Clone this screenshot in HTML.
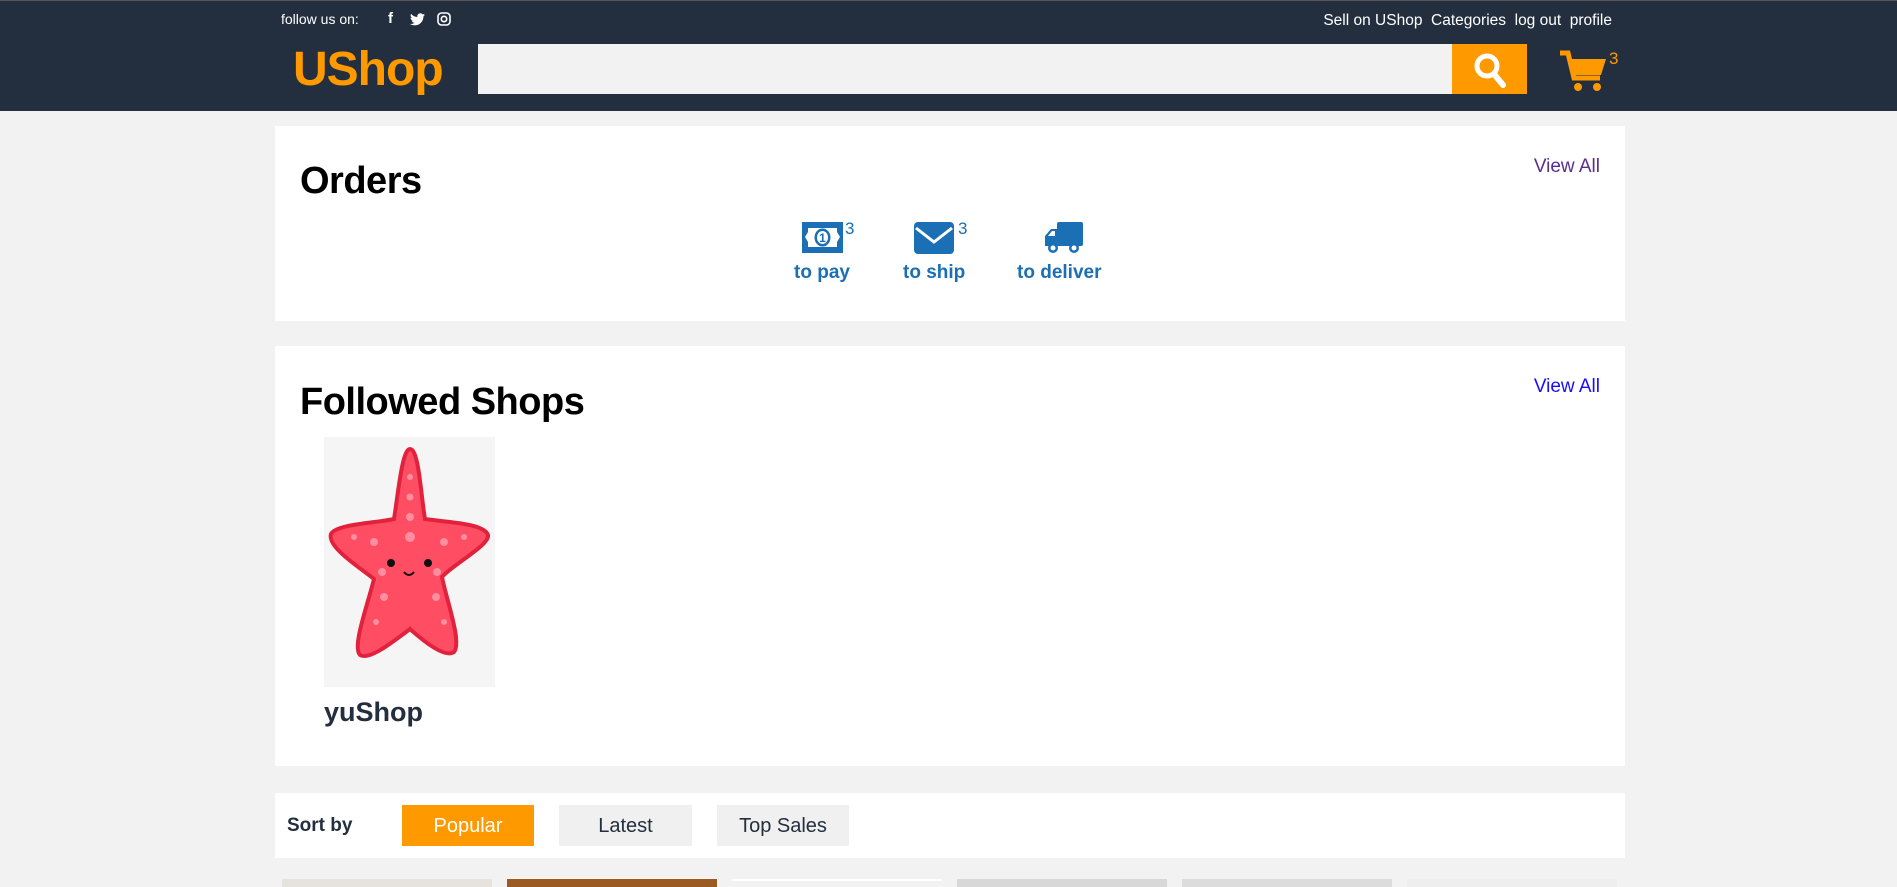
<!DOCTYPE html>
<html><head><meta charset="utf-8"><style>
*{box-sizing:border-box;margin:0;padding:0}
body{width:1897px;height:887px;overflow:hidden;background:#f2f2f2;font-family:"Liberation Sans",sans-serif;position:relative}
.hdr{position:absolute;left:0;top:0;width:1897px;height:111px;background:#232f3f;border-top:1px solid #555}
.abs{position:absolute}
.card{position:absolute;left:275px;width:1350px;background:#fff}
.h{position:absolute;left:25px;font-weight:bold;font-size:38px;color:#000;letter-spacing:-0.5px}
.va{position:absolute;right:25px;font-size:19px}
.lbl{position:absolute;top:262px;font-size:19px;font-weight:bold;color:#1a6fb5}
.cnt{position:absolute;font-size:17px;color:#1a6fb5}
.btn{position:absolute;top:805px;height:41px;font-size:20px;text-align:center;line-height:43px;background:#f0f0f0;color:#232f3e}
.th{position:absolute;top:879px;width:210px;height:8px}
</style></head><body>
<div class="hdr"></div>
<div class="abs" style="left:281px;top:11px;font-size:14px;color:#fff">follow us on:</div>
<div class="abs" style="left:388px;top:10px;font-size:15px;color:#fff;font-weight:bold">f</div>
<svg class="abs" style="left:410px;top:13px" width="15" height="13" viewBox="0 0 24 20"><path fill="#fff" d="M24 2.4a10 10 0 01-2.8.8A5 5 0 0023.3.5a10 10 0 01-3.1 1.2A4.9 4.9 0 0011.8 6 14 14 0 011.7.9a4.9 4.9 0 001.5 6.6A4.9 4.9 0 01.9 6.9a4.9 4.9 0 004 4.8 5 5 0 01-2.2.1 4.9 4.9 0 004.6 3.4A9.9 9.9 0 010 17.2 14 14 0 007.5 19.4c9.1 0 14-7.5 14-14v-.6A10 10 0 0024 2.4z"/></svg>
<svg class="abs" style="left:437px;top:12px" width="14" height="14" viewBox="0 0 14 14"><rect x="1" y="1" width="12" height="12" rx="3.5" fill="none" stroke="#fff" stroke-width="1.6"/><circle cx="7" cy="7" r="2.7" fill="none" stroke="#fff" stroke-width="1.6"/></svg>
<div class="abs" style="right:285px;top:12px;font-size:15.5px;color:#fff">Sell on UShop&nbsp;&nbsp;Categories&nbsp;&nbsp;log out&nbsp;&nbsp;profile</div>
<div class="abs" style="left:293px;top:42px;font-size:48px;font-weight:bold;color:#ff9900;letter-spacing:-1px">UShop</div>
<div class="abs" style="left:478px;top:44px;width:974px;height:50px;background:#f2f2f2"></div>
<div class="abs" style="left:1452px;top:44px;width:75px;height:50px;background:#ff9900"></div>
<svg class="abs" style="left:1472px;top:50px" width="36" height="40" viewBox="0 0 36 40"><circle cx="15" cy="16" r="10" fill="none" stroke="#fff" stroke-width="5"/><path d="M22 24l9 11" stroke="#fff" stroke-width="6" stroke-linecap="round"/></svg>
<svg class="abs" style="left:1558px;top:49px" width="50" height="44" viewBox="0 0 50 44"><path d="M2 4h8l6 25h26" fill="none" stroke="#ff9900" stroke-width="5"/><path d="M12 10h36l-5 16H16z" fill="#ff9900"/><circle cx="20" cy="38" r="4" fill="#ff9900"/><circle cx="39" cy="38" r="4" fill="#ff9900"/></svg>
<div class="abs" style="left:1609px;top:49px;font-size:17px;color:#ff9900">3</div>

<div class="card" style="top:126px;height:195px">
<div class="h" style="top:34px">Orders</div>
<div class="va" style="top:30px;color:#5c2d91">View All</div>
</div>
<svg class="abs" style="left:802px;top:222px" width="41" height="31" viewBox="0 0 41 31"><rect width="41" height="31" fill="#1a6fb5"/><path d="M6 6h29l0 4 3 5-3 5v5H6v-5l-3-5 3-5z" fill="#fff"/><ellipse cx="20.5" cy="15.5" rx="8" ry="9" fill="#1a6fb5"/><ellipse cx="20.5" cy="15.5" rx="5.5" ry="6.5" fill="#fff"/><text x="20.5" y="20" font-size="12" font-weight="bold" text-anchor="middle" fill="#1a6fb5" font-family="Liberation Sans">1</text></svg>
<div class="cnt" style="left:845px;top:219px">3</div>
<svg class="abs" style="left:914px;top:222px" width="40" height="32" viewBox="0 0 40 32"><rect width="40" height="32" rx="4" fill="#1a6fb5"/><path d="M2 6l18 14L38 6" fill="none" stroke="#fff" stroke-width="3"/></svg>
<div class="cnt" style="left:958px;top:219px">3</div>
<svg class="abs" style="left:1043px;top:222px" width="40" height="32" viewBox="0 0 40 32"><rect x="14" y="0" width="26" height="24" rx="2" fill="#1a6fb5"/><path d="M2 24V14l6-7h7v17z" fill="#1a6fb5"/><path d="M5 14l4-5h3v5z" fill="#fff"/><circle cx="10" cy="26" r="5" fill="#1a6fb5"/><circle cx="10" cy="26" r="2.5" fill="#fff"/><circle cx="31" cy="26" r="5" fill="#1a6fb5"/><circle cx="31" cy="26" r="2.5" fill="#fff"/></svg>
<div class="lbl" style="left:794px">to pay</div>
<div class="lbl" style="left:903px">to ship</div>
<div class="lbl" style="left:1017px">to deliver</div>

<div class="card" style="top:346px;height:420px">
<div class="h" style="top:35px">Followed Shops</div>
<div class="va" style="top:30px;color:#1a0dff">View All</div>
<div class="abs" style="left:49px;top:91px;width:171px;height:250px;background:#f5f5f5">
<svg width="171" height="250" viewBox="0 0 171 250"><path d="M86 12C95 12 97 60 101 82 120 85 160 86 164 98 166 108 128 128 118 140 123 165 138 205 130 215 120 222 95 200 86 192 70 204 45 224 36 218 28 210 43 170 50 142 35 130 3 110 7 97 12 87 52 86 70 82 74 58 78 12 86 12z" fill="#ff4d64" stroke="#e2223c" stroke-width="4"/><circle cx="67" cy="126" r="4" fill="#111"/><circle cx="104" cy="126" r="4" fill="#111"/><path d="M80 135q5 6 10 0" stroke="#111" stroke-width="2" fill="none"/><g fill="#ff8fa0"><circle cx="86" cy="40" r="3"/><circle cx="86" cy="60" r="3.5"/><circle cx="86" cy="80" r="4"/><circle cx="86" cy="100" r="5"/><circle cx="30" cy="100" r="3"/><circle cx="50" cy="105" r="4"/><circle cx="140" cy="100" r="3"/><circle cx="120" cy="105" r="4"/><circle cx="60" cy="160" r="4"/><circle cx="52" cy="185" r="3"/><circle cx="112" cy="160" r="4"/><circle cx="120" cy="185" r="3"/><circle cx="58" cy="135" r="4"/><circle cx="113" cy="135" r="4"/></g></svg>
</div>
<div class="abs" style="left:49px;top:351px;font-size:27px;font-weight:bold;color:#232f3e">yuShop</div>
</div>

<div class="card" style="top:793px;height:65px">
<div class="abs" style="left:12px;top:22px;font-size:19px;font-weight:bold;color:#232f3e">Sort by</div>
</div>
<div class="btn" style="left:402px;width:132px;background:#ff9900;color:#fff">Popular</div>
<div class="btn" style="left:559px;width:133px">Latest</div>
<div class="btn" style="left:717px;width:132px">Top Sales</div>

<div class="th" style="left:282px;background:#e6e2de"></div>
<div class="th" style="left:507px;background:#9b5a22"></div>
<div class="th" style="left:732px;background:#f2f2f2;border-top:2px solid #fff"></div>
<div class="th" style="left:957px;background:#d8d8d8"></div>
<div class="th" style="left:1182px;background:#dcdcdc"></div>
<div class="th" style="left:1407px;background:#eeeeee"></div>
</body></html>
